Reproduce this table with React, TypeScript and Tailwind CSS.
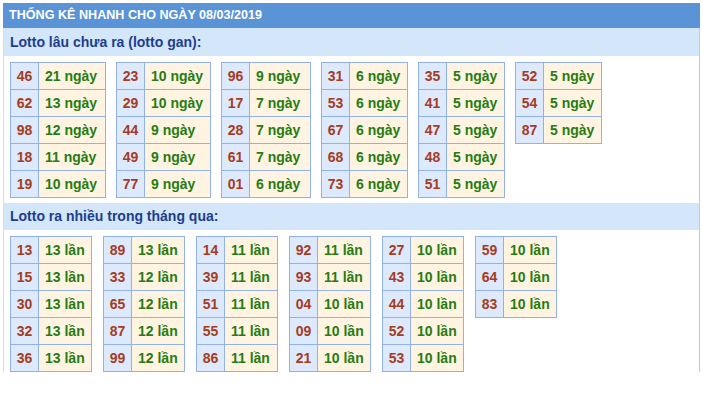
const gan: { w: number; rows: [string, string][] }[] = [
  { w: 96, rows: [["46", "21 ngày"], ["62", "13 ngày"], ["98", "12 ngày"], ["18", "11 ngày"], ["19", "10 ngày"]] },
  { w: 95, rows: [["23", "10 ngày"], ["29", "10 ngày"], ["44", "9 ngày"], ["49", "9 ngày"], ["77", "9 ngày"]] },
  { w: 90, rows: [["96", "9 ngày"], ["17", "7 ngày"], ["28", "7 ngày"], ["61", "7 ngày"], ["01", "6 ngày"]] },
  { w: 87, rows: [["31", "6 ngày"], ["53", "6 ngày"], ["67", "6 ngày"], ["68", "6 ngày"], ["73", "6 ngày"]] },
  { w: 87, rows: [["35", "5 ngày"], ["41", "5 ngày"], ["47", "5 ngày"], ["48", "5 ngày"], ["51", "5 ngày"]] },
  { w: 87, rows: [["52", "5 ngày"], ["54", "5 ngày"], ["87", "5 ngày"]] },
];

const nhieu: { w: number; rows: [string, string][] }[] = [
  { w: 82, rows: [["13", "13 lần"], ["15", "13 lần"], ["30", "13 lần"], ["32", "13 lần"], ["36", "13 lần"]] },
  { w: 82, rows: [["89", "13 lần"], ["33", "12 lần"], ["65", "12 lần"], ["87", "12 lần"], ["99", "12 lần"]] },
  { w: 82, rows: [["14", "11 lần"], ["39", "11 lần"], ["51", "11 lần"], ["55", "11 lần"], ["86", "11 lần"]] },
  { w: 82, rows: [["92", "11 lần"], ["93", "11 lần"], ["04", "10 lần"], ["09", "10 lần"], ["21", "10 lần"]] },
  { w: 82, rows: [["27", "10 lần"], ["43", "10 lần"], ["44", "10 lần"], ["52", "10 lần"], ["53", "10 lần"]] },
  { w: 82, rows: [["59", "10 lần"], ["64", "10 lần"], ["83", "10 lần"]] },
];

function LotoTable({ w, rows }: { w: number; rows: [string, string][] }) {
  return (
    <div className="border-l border-t border-[#92b1e5] self-start" style={{ width: w }}>
      {rows.map(([so, val], i) => (
        <div key={i} className="flex h-[27px]">
          <div className="w-[28px] shrink-0 flex items-center justify-center bg-[#dde9fc] text-[#a53c1e] border-r border-b border-[#92b1e5]">
            {so}
          </div>
          <div className="flex-1 flex items-center pl-[6px] bg-[#fff4e2] text-[#267c12] border-r border-b border-[#92b1e5]">
            {val}
          </div>
        </div>
      ))}
    </div>
  );
}

export default function App() {
  return (
    <div className="w-[703px] h-[399px] bg-white font-['Liberation_Sans',Arial,sans-serif] font-bold">
      <div className="ml-[3px] pt-[3px] w-[697px]">
        <div className="h-[25px] bg-[#5b94d6] text-white text-[12.6px] flex items-center pl-[6px]">
          THỐNG KÊ NHANH CHO NGÀY 08/03/2019
        </div>
        <div className="border-x border-l-[#dcdcdc] border-r-[#c8c8c8]">
          <div className="h-[28px] bg-[#d4e6fa] text-[#1d3e8e] text-[14px] flex items-center pl-[6px]">
            Lotto lâu chưa ra (lotto gan):
          </div>
          <div className="flex gap-[10px] pl-[6px] pt-[6px] pb-[6px] text-[14px] h-[147px]">
            {gan.map((t, i) => (
              <LotoTable key={i} {...t} />
            ))}
          </div>
          <div className="h-[27px] bg-[#d4e6fa] text-[#1d3e8e] text-[14px] flex items-center pl-[6px]">
            Lotto ra nhiều trong tháng qua:
          </div>
          <div className="flex gap-[11px] pl-[6px] pt-[6px] pb-[1px] text-[14px] h-[142px]">
            {nhieu.map((t, i) => (
              <LotoTable key={i} {...t} />
            ))}
          </div>
        </div>
      </div>
    </div>
  );
}
